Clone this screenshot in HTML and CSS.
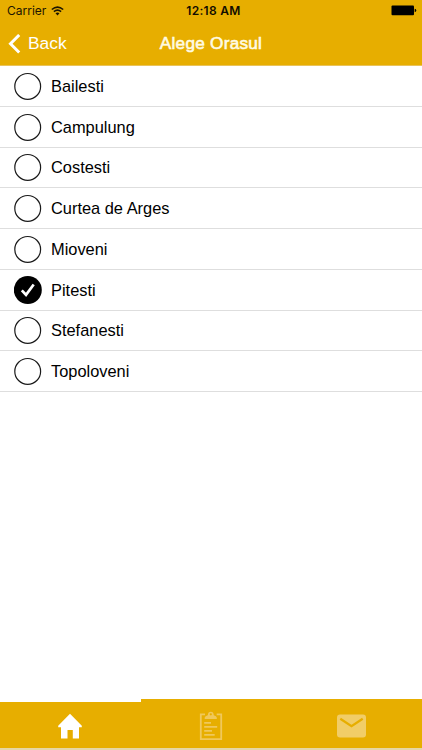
FILE: index.html
```
<!DOCTYPE html>
<html lang="ro">
<head>
<meta charset="utf-8">
<title>Alege Orasul</title>
<link rel="stylesheet" href="styles.css">
</head>
<body>
<svg width="0" height="0" class="defs"><symbol id="ring" viewBox="0 0 28 28"><circle cx="13.7" cy="14.4" r="12.9" fill="none" stroke="#1a1a1a" stroke-width="1.2"/></symbol></svg>
<div class="app">
  <header class="header">
    <div class="status">
      <div class="carrier"><span>Carrier</span>
        <svg class="wifi" width="13" height="10" viewBox="0 0 13 10" fill="none" stroke="#1c1500" stroke-width="1.6"><path d="M.8 3.5Q6.5-1.3 12.2 3.5M2.9 5.7Q6.5 2.6 10.1 5.7"/><path d="M4.5 7.3Q6.5 5.6 8.5 7.3L6.5 9.4Z" fill="#1c1500" stroke="none"/></svg>
      </div>
      <div class="time">12:18 AM</div>
      <svg class="battery" width="26" height="11" viewBox="0 0 26 11"><rect x=".5" y=".6" width="22.5" height="9.6" rx="1"/><path d="M23.7 3.8q1.6.3 1.6 1.7t-1.6 1.7z"/></svg>
    </div>
    <nav class="navbar">
      <a class="back"><svg width="13" height="20" viewBox="0 0 13 20" fill="none" stroke="#fff" stroke-width="3"><path d="M11.2 1 2.5 9.7l8.7 8.8"/></svg><span class="label">Back</span></a>
      <h1 class="title">Alege Orasul</h1>
      <span></span>
    </nav>
  </header>
  <main class="content">
    <ul class="cities">
      <li class="city"><svg class="radio"><use href="#ring"/></svg><span class="name">Bailesti</span></li>
      <li class="city"><svg class="radio"><use href="#ring"/></svg><span class="name">Campulung</span></li>
      <li class="city"><svg class="radio"><use href="#ring"/></svg><span class="name">Costesti</span></li>
      <li class="city"><svg class="radio"><use href="#ring"/></svg><span class="name">Curtea de Arges</span></li>
      <li class="city"><svg class="radio"><use href="#ring"/></svg><span class="name">Mioveni</span></li>
      <li class="city"><svg class="radio" viewBox="0 0 28 28"><circle cx="13.8" cy="14" r="14"/><path d="m7.8 14.4 4.2 4.4 7.7-10.3" fill="none" stroke="#fff" stroke-width="2.7"/></svg><span class="name">Pitesti</span></li>
      <li class="city"><svg class="radio"><use href="#ring"/></svg><span class="name">Stefanesti</span></li>
      <li class="city"><svg class="radio"><use href="#ring"/></svg><span class="name">Topoloveni</span></li>
    </ul>
  </main>
  <footer class="tabs">
    <a class="tab active"><svg width="24" height="26" viewBox="0 0 24 26" fill="#fff"><path d="M12 .8.2 12.8v1.5H3v11.1h6.5v-8.5h5.3v8.5H21V14.3h2.8v-1.5z"/></svg></a>
    <a class="tab"><svg width="24" height="30" viewBox="0 0 24 30" fill="none" stroke="#f0c85b" stroke-width="1.8"><path d="M6 3.3H1.8v24.9h20.4V3.3h-4.5"/><path d="M5.7 8V6.5Q6 5 8.8 4.2 9 .8 11.8.8t3 3.4q2.8.8 3 2.3V8z" fill="#f0c85b" stroke="none"/><circle cx="11.8" cy="3.3" r="1.1" fill="#e7ae00" stroke="none"/><path d="M5.2 11.8H12M5.2 15.8h13M5.2 19.8H13M5.2 23.8h10.5"/></svg></a>
    <a class="tab"><svg width="29" height="24" viewBox="0 0 29 24"><rect width="29" height="23" y=".5" rx="3" fill="#f1cd68"/><path d="m3.3 4.8 11.2 7.3 11.2-7.3" fill="none" stroke="#e7ae00" stroke-width="2.3"/></svg></a>
  </footer>
</div>
</body>
</html>
```
FILE: styles.css
```
* { box-sizing: border-box; }
body { margin: 0; background: #fff; color: #000; font-family: "Liberation Sans", Arial, sans-serif; }
.defs { display: none; }
.app { width: 422px; height: 750px; display: flex; flex-direction: column; overflow: hidden; }
.header { height: 66px; background: #e7ae00; border-bottom: 1px solid #e9c35a; flex: none; }
.status { height: 22px; display: grid; grid-template-columns: 1fr auto 1fr; align-items: center; padding: 0 5px 0 7px; font: 12px/22px Inter, sans-serif; color: #1c1500; }
.carrier { display: flex; align-items: center; gap: 5px; letter-spacing: 0; }
.wifi { margin-top: -1px; }
.time { font-weight: 600; color: #120d00; letter-spacing: .3px; margin-left: 3px; }
.battery { justify-self: end; margin-top: -1px; }
.navbar { height: 43px; display: grid; grid-template-columns: 1fr auto 1fr; align-items: center; padding: 0 8px; color: #fff; }
.back { display: flex; align-items: center; gap: 7px; font-size: 17.4px; line-height: 20px; }
.label { margin-bottom: 2px; }
.title { margin: 0 0 2px; font-size: 17.2px; line-height: 20px; font-weight: 400; letter-spacing: .25px; color: #fffbe3; -webkit-text-stroke: .6px #fffbe3; }
.content { flex: 1; }
.cities { list-style: none; margin: 0; padding: 0; }
.city { height: 40.75px; display: flex; align-items: center; gap: 9px; padding: 0 14px; border-bottom: 1px solid #dedede; }
.radio { width: 28px; height: 28px; flex: none; display: block; }
.name { font-size: 16.4px; line-height: 20px; }
.tabs { height: 51px; flex: none; display: grid; grid-template-columns: repeat(3, 1fr); background: #e7ae00; border-bottom: 2px solid #e5d6a4; }
.tab { display: flex; align-items: center; justify-content: center; padding-top: 5px; }
.active { border-top: 3px solid #fff; padding-top: 1px; }
```
